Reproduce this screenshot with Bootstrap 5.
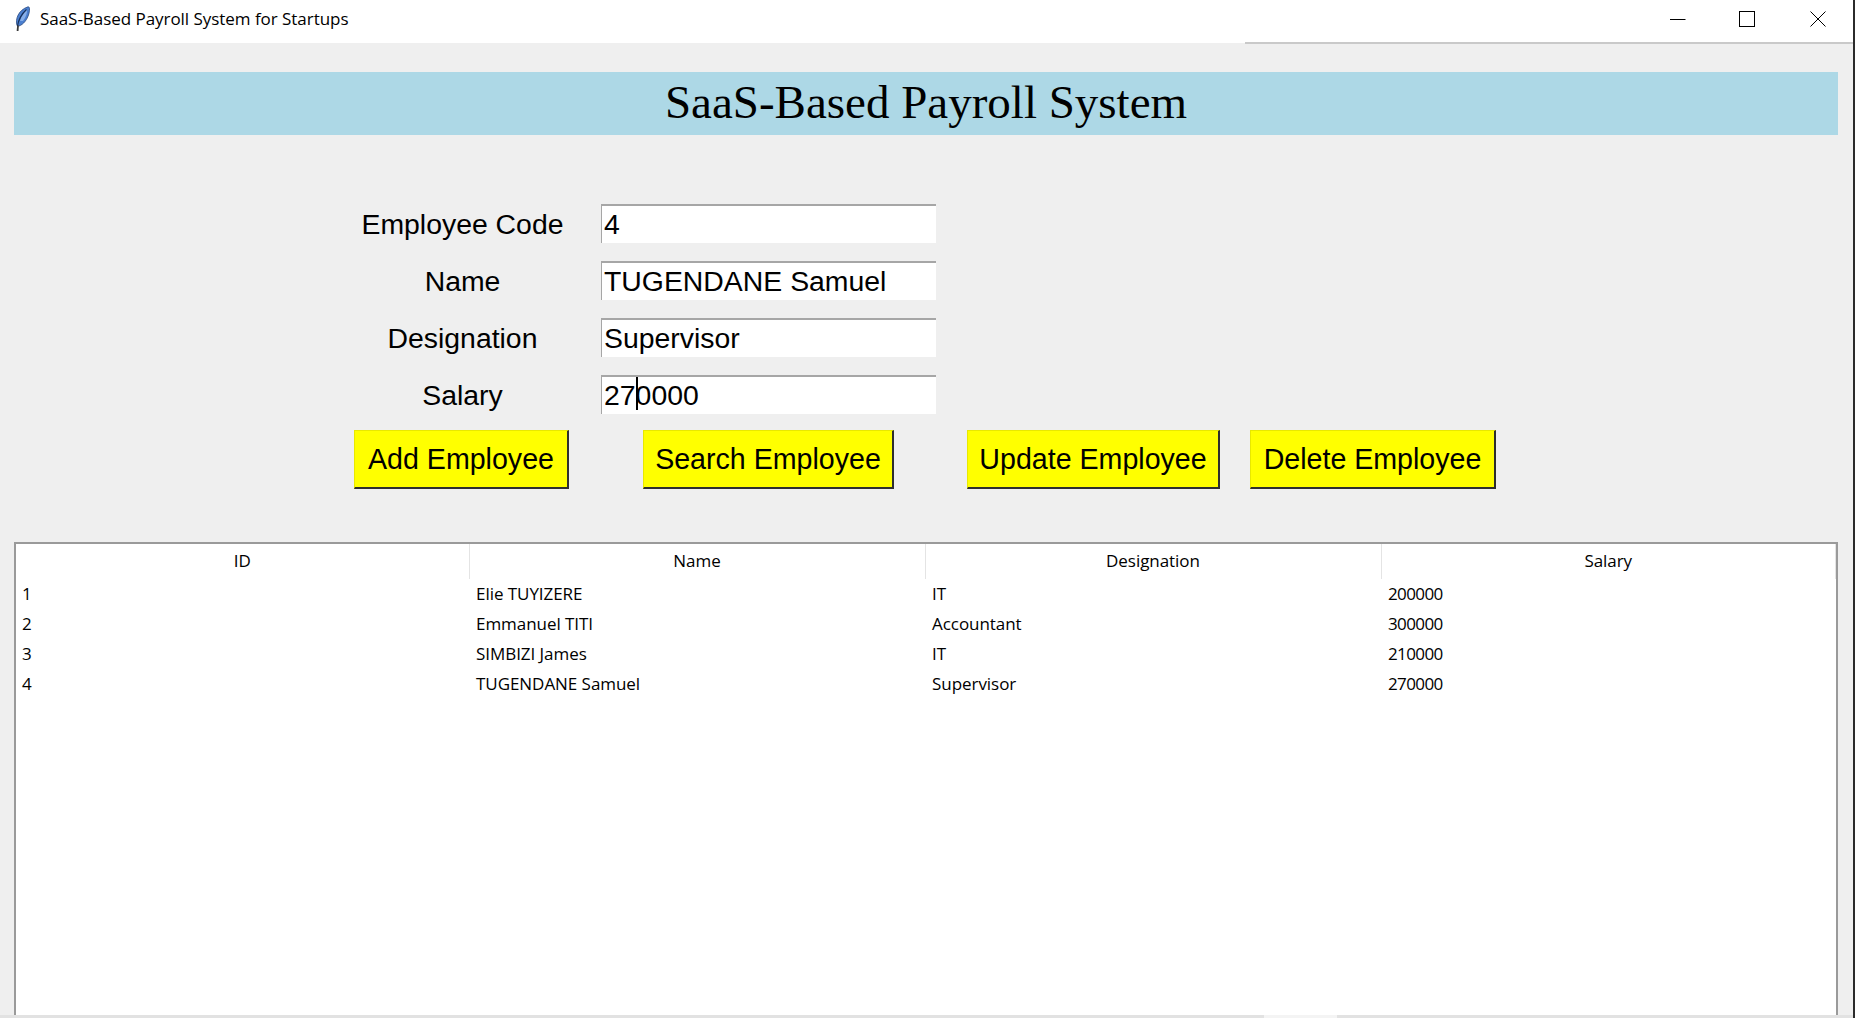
<!DOCTYPE html>
<html lang="en">
<head>
<meta charset="utf-8">
<title>SaaS-Based Payroll System for Startups</title>
<link rel="stylesheet" href="https://cdn.jsdelivr.net/npm/bootstrap@5.3.0/dist/css/bootstrap.min.css">
<style>
html,body{height:100%;overflow:hidden}
body{background:#efefef;color:#000;font-family:"Open Sans","Noto Sans",sans-serif;border-right:2px solid #2b2b2b}
.app-shell{height:1018px;display:flex;flex-direction:column}
.title-strip{height:43px;background:#fff;padding:0 0 5px 14px;font-size:17px;letter-spacing:-.04px;position:relative}
.title-text{margin-left:-2px}
.title-rule{position:absolute;left:1245px;right:0;bottom:-1px;height:2px;background:#c9c9c9}
.win-ctl{width:71px;height:36px}
.win-ctl-min{margin-right:-2px}
.banner{margin:29px 15px 0 14px;height:63px;background:#add8e6;font-family:"Liberation Serif",serif;font-size:47px;line-height:61px;text-align:center}
.form-zone{margin-top:69px;margin-left:354px;display:grid;grid-template-columns:215px 335px;column-gap:32px;row-gap:18px;font-family:"Liberation Sans",sans-serif;font-size:28.4px}
.field-label{text-align:center;line-height:41px;height:39px;padding-left:2px}
.field-box.form-control{height:39px;padding:0 0 0 2px;font-size:28.4px;line-height:37px;border:0;border-top:2px solid #a6a6a6;border-left:1px solid #a6a6a6;border-radius:0;background:#fff;color:#000;white-space:nowrap}
.text-caret{display:inline-block;width:0;height:33px;border-left:2px solid #000;margin-right:-2px;vertical-align:-5px}
.action-row{margin:16px 0 0 354px;display:flex;font-family:"Liberation Sans",sans-serif}
.raised-btn.btn{height:59px;padding:0;border-radius:0;background:#ff0;color:#000;font-size:28.6px;line-height:1;border:0;border-top:1px solid #e8e800;border-left:1px solid #e8e800;border-right:2px solid #2e2e2e;border-bottom:2px solid #2e2e2e}
.w-add{width:215px;margin-right:74px}
.w-search{width:251px;margin-right:73px}
.w-update{width:253px;margin-right:30px}
.w-delete{width:246px}
.tree-wrap{margin:53px 15px 0 14px;flex:1 1 auto;background:#fff;border:2px solid #9a9a9a;border-bottom:0}
.tree-view{width:100%;table-layout:fixed;font-size:17px;letter-spacing:-.05px;margin:0}
.tree-view th{height:35px;font-weight:400;text-align:center;border-right:1px solid #e4e4e4;padding:0 0 2px}
.tree-view th:nth-child(1){width:453px}
.tree-view th:nth-child(2){width:456px}
.tree-view th:nth-child(3){width:456px}
.tree-view td{height:30px;padding:0 0 1px 7px;line-height:28px}
.tree-view td:first-child{padding-left:6px}
.tree-view td:last-child{letter-spacing:-.6px}
.foot-line{height:3px;background:#e2e2e2;display:flex;justify-content:flex-end}
.foot-line span{display:block;width:73px;height:3px;background:#f4f4f4;margin-right:516px}
</style>
</head>
<body>
<div class="app-shell">
  <div class="title-strip d-flex align-items-center flex-shrink-0">
    <svg width="20" height="26" viewBox="0 0 20 26" class="me-2 flex-shrink-0" aria-hidden="true">
      <path d="M3 19.5 C1 13 4.5 4 14 0.8 C16.2 0.5 15.6 5 14.8 8 C13.2 13.5 9.5 18.5 5 20 Z" fill="#4a7fd0" stroke="#2b4a80" stroke-width=".8"/>
      <path d="M6 15 C7.5 10 9.5 6.5 13 3.5 C13.3 7 12 11 9 15 Z" fill="#86aee8"/>
      <path d="M3.5 20 C4.5 14 7.5 8 12.5 3.5" stroke="#17305a" stroke-width="1.2" fill="none"/>
      <path d="M4 19.5 L3.6 25" stroke="#3a3a3a" stroke-width="1.8"/>
    </svg>
    <span class="title-text">SaaS-Based Payroll System for Startups</span>
    <div class="ms-auto d-flex">
      <div class="win-ctl win-ctl-min d-flex align-items-center justify-content-center"><svg width="16" height="16" viewBox="0 0 16 16"><path d="M0 8.5H15.5" stroke="#000"/></svg></div>
      <div class="win-ctl d-flex align-items-center justify-content-center"><svg width="16" height="16" viewBox="0 0 16 16"><rect x=".5" y=".5" width="15" height="15" fill="none" stroke="#000"/></svg></div>
      <div class="win-ctl d-flex align-items-center justify-content-center"><svg width="16" height="16" viewBox="0 0 16 16"><path d="M.5.5L15.5 15.5M15.5.5L.5 15.5" stroke="#000"/></svg></div>
    </div>
    <div class="title-rule"></div>
  </div>
  <div class="banner">SaaS-Based Payroll System</div>
  <div class="form-zone">
    <div class="field-label">Employee Code</div><div class="field-box form-control">4</div>
    <div class="field-label">Name</div><div class="field-box form-control">TUGENDANE Samuel</div>
    <div class="field-label">Designation</div><div class="field-box form-control">Supervisor</div>
    <div class="field-label">Salary</div><div class="field-box form-control">27<span class="text-caret"></span>0000</div>
  </div>
  <div class="action-row">
    <button type="button" class="btn raised-btn w-add">Add Employee</button>
    <button type="button" class="btn raised-btn w-search">Search Employee</button>
    <button type="button" class="btn raised-btn w-update">Update Employee</button>
    <button type="button" class="btn raised-btn w-delete">Delete Employee</button>
  </div>
  <div class="tree-wrap">
    <table class="tree-view">
      <thead><tr><th>ID</th><th>Name</th><th>Designation</th><th>Salary</th></tr></thead>
      <tbody>
        <tr><td>1</td><td>Elie TUYIZERE</td><td>IT</td><td>200000</td></tr>
        <tr><td>2</td><td>Emmanuel TITI</td><td>Accountant</td><td>300000</td></tr>
        <tr><td>3</td><td>SIMBIZI James</td><td>IT</td><td>210000</td></tr>
        <tr><td>4</td><td>TUGENDANE Samuel</td><td>Supervisor</td><td>270000</td></tr>
      </tbody>
    </table>
  </div>
  <div class="foot-line"><span></span></div>
</div>
</body>
</html>
